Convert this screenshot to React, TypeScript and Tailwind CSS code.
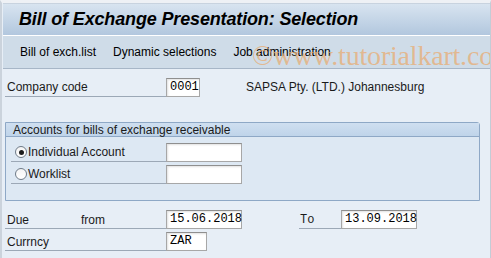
const inputBase =
  'h-[19px] border border-[#a7a7a7] border-t-[#8f8f8f] bg-white shadow-[inset_1px_1px_2px_rgba(0,0,0,0.12)] px-[3px] text-[12px] leading-[17px] text-black';
const mono = { fontFamily: '"Liberation Mono", "Courier New", monospace' };

function Radio({ checked }: { checked?: boolean }) {
  return (
    <span className="flex h-[12px] w-[12px] items-center justify-center rounded-full border border-[#6f7b88] bg-gradient-to-b from-[#f4f4f4] to-white">
      {checked && <span className="h-[5px] w-[5px] rounded-full bg-[#1c1c1c]" />}
    </span>
  );
}

export default function App() {
  return (
    <div
      className="relative h-[258px] w-[491px] overflow-hidden border-t-[3px] border-l-[2px] border-r border-[#eef1f5] border-l-[#cbd3dc] border-r-[#c3ccd6] bg-[#e7eef6] text-[12px] text-[#1a1a1a]"
      style={{ fontFamily: '"Liberation Sans", Arial, sans-serif' }}
    >
      {/* Title */}
      <div className="ml-px flex h-[32px] items-center border-t border-[#c8d3df] bg-gradient-to-b from-[#d8e4f0] to-[#b2c7de] pl-[16px]">
        <h1 className="text-[18px] font-bold italic tracking-[-0.15px] text-black">
          Bill of Exchange Presentation: Selection
        </h1>
      </div>
      <div className="ml-px h-px bg-white" />

      {/* Menu bar */}
      <div className="relative ml-px flex h-[33px] items-center gap-[17px] border-b border-[#a7b6c7] bg-[#cfdce8] pl-[17px] text-[12px] text-black">
        <span>Bill of exch.list</span>
        <span>Dynamic selections</span>
        <span>Job administration</span>
        <span
          className="pointer-events-none absolute left-[249px] top-[-1px] whitespace-nowrap text-[28px] tracking-[-0.2px] text-[#e8ad74]/75"
          style={{ fontFamily: '"Liberation Serif", "Times New Roman", serif' }}
        >
          ©www.tutorialkart.com
        </span>
      </div>

      {/* Company code */}
      <div className="ml-[3px] mt-[9px] flex items-end">
        <div className="h-[19px] w-[161px] border-b border-[#9ca8b6] pl-[2px] leading-[18px]">Company code</div>
        <div className={`${inputBase} w-[34px] bg-[#a2bcd9]`} style={mono}>0001</div>
        <div className="ml-[46px] h-[19px] leading-[18px]">SAPSA Pty. (LTD.) Johannesburg</div>
      </div>

      {/* Group box */}
      <div className="ml-[3px] mt-[25px] h-[79px] w-[475px] rounded-tr-[3px] border border-[#8ea8c6] bg-[#dde8f3]">
        <div className="h-[14px] border-b border-[#8ea8c6] bg-gradient-to-b from-[#cfdff0] to-[#bfd4ea] pl-[7px] text-[12px] leading-[14px]">
          Accounts for bills of exchange receivable
        </div>
        <div className="ml-[5px] mt-[6px] flex items-end">
          <div className="flex h-[19px] w-[155px] items-center gap-px border-b border-[#9ca8b6] pl-[4px]">
            <Radio checked />
            <span>Individual Account</span>
          </div>
          <div className={`${inputBase} w-[76px]`} />
        </div>
        <div className="ml-[5px] mt-[3px] flex items-end">
          <div className="flex h-[19px] w-[155px] items-center gap-px border-b border-[#9ca8b6] pl-[4px]">
            <Radio />
            <span>Worklist</span>
          </div>
          <div className={`${inputBase} w-[76px]`} />
        </div>
      </div>

      {/* Due */}
      <div className="ml-[3px] mt-[9px] flex items-end">
        <div className="flex h-[19px] w-[161px] border-b border-[#9ca8b6] pl-[2px] leading-[20px]">
          <span className="w-[74px]">Due</span>
          <span>from</span>
        </div>
        <div className={`${inputBase} w-[76px]`} style={mono}>15.06.2018</div>
        <div className="ml-[57px] h-[19px] w-[42px] border-b border-[#9ca8b6] pl-px leading-[20px]" style={mono}>To</div>
        <div className={`${inputBase} w-[76px]`} style={mono}>13.09.2018</div>
      </div>

      {/* Currency */}
      <div className="ml-[3px] mt-[3px] flex items-end">
        <div className="h-[19px] w-[161px] border-b border-[#9ca8b6] pl-[2px] leading-[20px]">Currncy</div>
        <div className={`${inputBase} w-[41px]`} style={mono}>ZAR</div>
      </div>
    </div>
  );
}
